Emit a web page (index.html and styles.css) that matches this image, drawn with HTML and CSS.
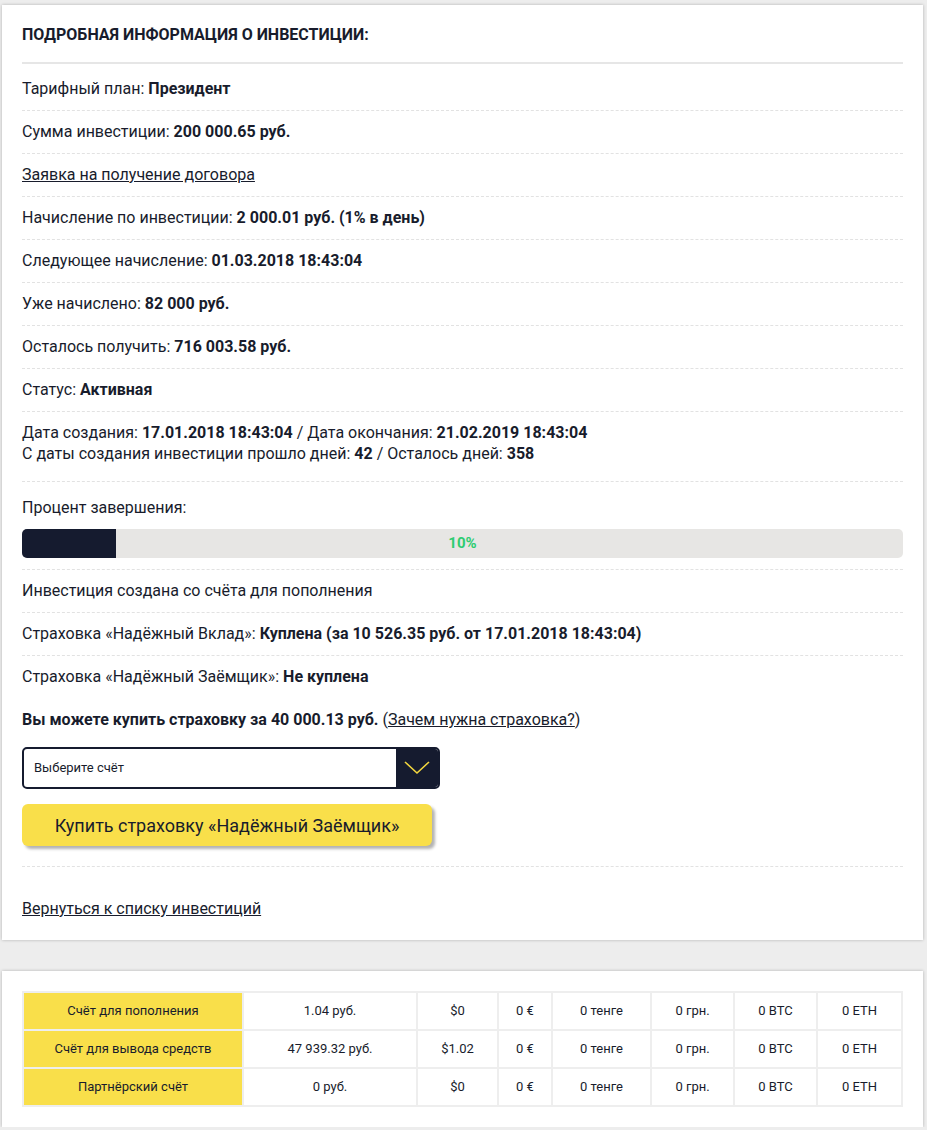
FILE: index.html
```html
<!DOCTYPE html>
<html lang="ru">
<head>
    <meta charset="UTF-8">
    <title>Подробная информация о инвестиции</title>
    <link rel="stylesheet" href="styles.css">
</head>
<body>
    <div class="card">
        <h2 class="card-title">Подробная информация о инвестиции:</h2>

        <div class="row">Тарифный план: <b>Президент</b></div>
        <div class="row">Сумма инвестиции: <b>200 000.65 руб.</b></div>
        <div class="row"><a href="#">Заявка на получение договора</a></div>
        <div class="row">Начисление по инвестиции: <b>2 000.01 руб. (1% в день)</b></div>
        <div class="row">Следующее начисление: <b>01.03.2018 18:43:04</b></div>
        <div class="row">Уже начислено: <b>82 000 руб.</b></div>
        <div class="row">Осталось получить: <b>716 003.58 руб.</b></div>
        <div class="row">Статус: <b>Активная</b></div>
        <div class="row row-dates">
            Дата создания: <b>17.01.2018 18:43:04</b> / Дата окончания: <b>21.02.2019 18:43:04</b><br>
            С даты создания инвестиции прошло дней: <b>42</b> / Осталось дней: <b>358</b>
        </div>
        <div class="row row-progress">
            Процент завершения:
            <div class="progress">
                <div class="progress-fill" style="width: 10.7%"></div>
                <span class="progress-label">10%</span>
            </div>
        </div>
        <div class="row">Инвестиция создана со счёта для пополнения</div>
        <div class="row">Страховка «Надёжный Вклад»: <b>Куплена (за 10 526.35 руб. от 17.01.2018 18:43:04)</b></div>
        <div class="row no-border">Страховка «Надёжный Заёмщик»: <b>Не куплена</b></div>

        <div class="row buy">
            <b>Вы можете купить страховку за 40 000.13 руб.</b> (<a href="#">Зачем нужна страховка?</a>)
            <div class="select">
                <span class="select-text">Выберите счёт</span>
                <span class="select-arrow">
                    <svg width="26" height="14" viewBox="0 0 26 14"><path d="M1 1 L13 12 L25 1" fill="none" stroke="#f2d63e" stroke-width="1.6"/></svg>
                </span>
            </div>
            <button class="btn-buy">Купить страховку «Надёжный Заёмщик»</button>
        </div>

        <div class="back"><a href="#">Вернуться к списку инвестиций</a></div>
    </div>

    <div class="card card-balances">
        <table class="balances">
            <tr>
                <th>Счёт для пополнения</th>
                <td>1.04 руб.</td><td>$0</td><td>0 €</td><td>0 тенге</td><td>0 грн.</td><td>0 BTC</td><td>0 ETH</td>
            </tr>
            <tr>
                <th>Счёт для вывода средств</th>
                <td>47 939.32 руб.</td><td>$1.02</td><td>0 €</td><td>0 тенге</td><td>0 грн.</td><td>0 BTC</td><td>0 ETH</td>
            </tr>
            <tr>
                <th>Партнёрский счёт</th>
                <td>0 руб.</td><td>$0</td><td>0 €</td><td>0 тенге</td><td>0 грн.</td><td>0 BTC</td><td>0 ETH</td>
            </tr>
        </table>
    </div>
</body>
</html>
```

FILE: styles.css
```css
body {
    margin: 0;
    padding: 5px 4px 0 2px;
    background-color: #ededed;
    font-family: Roboto, "Liberation Sans", Arial, sans-serif;
    font-size: 16px;
    line-height: 20px;
    color: #181c2c;
}
a {
    color: #181c2c;
    text-decoration: underline;
}
b {
    font-weight: bold;
}
.card {
    background-color: #fff;
    box-shadow: 0 0 3px rgba(0, 0, 0, 0.25);
    padding: 20px;
}
.card-title {
    margin: 0 0 4px;
    padding: 0 0 17px;
    font-size: 16px;
    line-height: 20px;
    font-weight: bold;
    text-transform: uppercase;
    border-bottom: 2px solid #e6e6e6;
}
.row {
    padding: 11px 0;
    border-bottom: 1px dashed #e2e2e2;
}
.row.no-border {
    border-bottom: none;
}
.row-dates {
    line-height: 21px;
    padding: 10px 0 17px;
}
.row-progress {
    padding-top: 16px;
}
.progress {
    position: relative;
    height: 29px;
    margin-top: 11px;
    background-color: #e7e6e4;
    border-radius: 5px;
    overflow: hidden;
}
.progress-fill {
    height: 100%;
    background-color: #151b2f;
}
.progress-label {
    position: absolute;
    top: 0;
    left: 0;
    right: 0;
    line-height: 29px;
    text-align: center;
    font-size: 15px;
    font-weight: bold;
    color: #2ecc71;
}
.buy {
    padding: 12px 0 20px;
}
.select {
    display: flex;
    width: 414px;
    height: 38px;
    margin-top: 17px;
    border: 2px solid #151b2f;
    border-radius: 5px;
    overflow: hidden;
}
.select-text {
    flex: 1;
    padding-left: 10px;
    font-size: 13px;
    line-height: 38px;
}
.select-arrow {
    width: 42px;
    display: flex;
    align-items: center;
    justify-content: center;
    background-color: #151b2f;
}
.btn-buy {
    display: block;
    width: 410px;
    height: 42px;
    margin-top: 15px;
    padding: 0;
    border: none;
    border-radius: 6px;
    background-color: #f9df4a;
    box-shadow: 3px 3px 3px rgba(0, 0, 0, 0.3);
    font-family: Roboto, "Liberation Sans", Arial, sans-serif;
    font-size: 18px;
    color: #181c2c;
    cursor: pointer;
}
.back {
    padding: 32px 0 1px;
}
.card-balances {
    margin-top: 31px;
}
.balances {
    width: 100%;
    table-layout: fixed;
    border-collapse: separate;
    border-spacing: 2px;
    background-color: #eeeeee;
    font-size: 13px;
}
.balances th,
.balances td {
    height: 36px;
    padding: 0;
    text-align: center;
    font-weight: normal;
    background-color: #fff;
}
.balances th {
    width: 218px;
    background-color: #f9df4a;
}
.balances td:nth-child(2) { width: 172px; }
.balances td:nth-child(3) { width: 79px; }
.balances td:nth-child(4) { width: 52px; }
.balances td:nth-child(5) { width: 97px; }
.balances td:nth-child(6) { width: 81px; }
.balances td:nth-child(7) { width: 81px; }
```
